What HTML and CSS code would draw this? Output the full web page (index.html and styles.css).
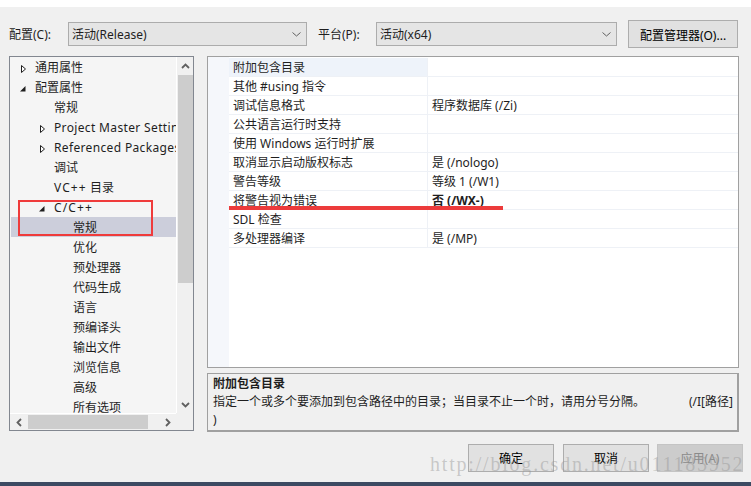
FILE: index.html
```html
<!DOCTYPE html>
<html lang="zh-CN">
<head>
<meta charset="utf-8">
<title>属性页</title>
<link rel="stylesheet" href="styles.css">
</head>
<body>
<div class="screen">
  <div class="topstrip"></div>
  <div class="dialog">
    <div class="toolbar">
      <span class="lbl lbl-cfg">配置(C):</span>
      <div class="combo combo-cfg"><span class="ctext">活动(Release)</span><svg class="chev" width="9" height="5" viewBox="0 0 9 5"><polyline points="0.5,0.5 4.5,4 8.5,0.5" fill="none" stroke="#606060" stroke-width="1"/></svg></div>
      <span class="lbl lbl-plat">平台(P):</span>
      <div class="combo combo-plat"><span class="ctext">活动(x64)</span><svg class="chev" width="9" height="5" viewBox="0 0 9 5"><polyline points="0.5,0.5 4.5,4 8.5,0.5" fill="none" stroke="#606060" stroke-width="1"/></svg></div>
      <button class="btn btn-mgr">配置管理器(O)...</button>
    </div>

    <div class="main">
      <div class="tree">
        <div class="tree-body">
          <div class="tree-rows">
            <div class="row l0"><svg class="tw" width="16" height="20" viewBox="0 0 16 20"><polygon points="2.5,8.5 6.5,12 2.5,15.5" fill="#fff" stroke="#1e1e1e" stroke-width="1"/></svg><span class="t">通用属性</span></div>
            <div class="row l0"><svg class="tw" width="16" height="20" viewBox="0 0 16 20"><polygon points="6.5,9 6.5,14.5 1,14.5" fill="#1e1e1e"/></svg><span class="t">配置属性</span></div>
            <div class="row l1"><span class="tw-empty"></span><span class="t">常规</span></div>
            <div class="row l1"><svg class="tw" width="16" height="20" viewBox="0 0 16 20"><polygon points="2.5,8.5 6.5,12 2.5,15.5" fill="#fff" stroke="#1e1e1e" stroke-width="1"/></svg><span class="t lat">Project Master Settings</span></div>
            <div class="row l1"><svg class="tw" width="16" height="20" viewBox="0 0 16 20"><polygon points="2.5,8.5 6.5,12 2.5,15.5" fill="#fff" stroke="#1e1e1e" stroke-width="1"/></svg><span class="t lat">Referenced Packages</span></div>
            <div class="row l1"><span class="tw-empty"></span><span class="t">调试</span></div>
            <div class="row l1"><span class="tw-empty"></span><span class="t"><span class="plus">VC++</span> 目录</span></div>
            <div class="row l1"><svg class="tw" width="16" height="20" viewBox="0 0 16 20"><polygon points="6.5,9 6.5,14.5 1,14.5" fill="#1e1e1e"/></svg><span class="t plus">C/C++</span></div>
            <div class="row l2 selected"><span class="tw-empty"></span><span class="t">常规</span></div>
            <div class="row l2"><span class="tw-empty"></span><span class="t">优化</span></div>
            <div class="row l2"><span class="tw-empty"></span><span class="t">预处理器</span></div>
            <div class="row l2"><span class="tw-empty"></span><span class="t">代码生成</span></div>
            <div class="row l2"><span class="tw-empty"></span><span class="t">语言</span></div>
            <div class="row l2"><span class="tw-empty"></span><span class="t">预编译头</span></div>
            <div class="row l2"><span class="tw-empty"></span><span class="t">输出文件</span></div>
            <div class="row l2"><span class="tw-empty"></span><span class="t">浏览信息</span></div>
            <div class="row l2"><span class="tw-empty"></span><span class="t">高级</span></div>
            <div class="row l2"><span class="tw-empty"></span><span class="t">所有选项</span></div>
          </div>
          <div class="vscroll">
            <div class="sarrow"><svg width="9" height="6" viewBox="0 0 9 6"><polyline points="1,5 4.5,1.5 8,5" fill="none" stroke="#606060" stroke-width="1.8"/></svg></div>
            <div class="vthumb"></div>
            <div class="spacer"></div>
            <div class="sarrow"><svg width="9" height="6" viewBox="0 0 9 6"><polyline points="1,1 4.5,4.5 8,1" fill="none" stroke="#606060" stroke-width="1.8"/></svg></div>
          </div>
        </div>
        <div class="hscroll-row">
          <div class="hscroll">
            <div class="harrow"><svg width="6" height="9" viewBox="0 0 6 9"><polyline points="5,1 1.5,4.5 5,8" fill="none" stroke="#606060" stroke-width="1.8"/></svg></div>
            <div class="hthumb"></div>
            <div class="spacer"></div>
            <div class="harrow"><svg width="6" height="9" viewBox="0 0 6 9"><polyline points="1,1 4.5,4.5 1,8" fill="none" stroke="#606060" stroke-width="1.8"/></svg></div>
          </div>
          <div class="corner"></div>
        </div>
        <div class="redbox"></div>
      </div>

      <div class="right">
        <div class="grid">
          <div class="gutter"></div>
          <div class="table">
            <div class="prow sel"><div class="pname">附加包含目录</div><div class="pval"></div></div>
            <div class="prow"><div class="pname">其他 #using 指令</div><div class="pval"></div></div>
            <div class="prow"><div class="pname">调试信息格式</div><div class="pval">程序数据库 (/Zi)</div></div>
            <div class="prow"><div class="pname">公共语言运行时支持</div><div class="pval"></div></div>
            <div class="prow"><div class="pname">使用 Windows 运行时扩展</div><div class="pval"></div></div>
            <div class="prow"><div class="pname">取消显示启动版权标志</div><div class="pval">是 (/nologo)</div></div>
            <div class="prow"><div class="pname">警告等级</div><div class="pval">等级 1 (/W1)</div></div>
            <div class="prow"><div class="pname">将警告视为错误</div><div class="pval bold">否 (/WX-)</div></div>
            <div class="prow"><div class="pname">SDL 检查</div><div class="pval"></div></div>
            <div class="prow"><div class="pname">多处理器编译</div><div class="pval">是 (/MP)</div></div>
          </div>
          <div class="redline"></div>
        </div>
        <div class="desc">
          <div class="desc-title">附加包含目录</div>
          <div class="desc-line"><span>指定一个或多个要添加到包含路径中的目录；当目录不止一个时，请用分号分隔。</span><span>(/I[路径]</span></div>
          <div class="desc-line"><span>)</span></div>
        </div>
      </div>
    </div>

    <div class="footer">
      <button class="btn btn-foot btn-ok">确定</button>
      <button class="btn btn-foot">取消</button>
      <button class="btn btn-foot btn-dis">应用(A)</button>
    </div>
    <div class="watermark">http://blog.csdn.net/u011185952</div>
  </div>
  <div class="taskbar"></div>
</div>
</body>
</html>
```

FILE: styles.css
```css
html, body {
  margin: 0;
  padding: 0;
}
body {
  background: #f0f0f0;
  font-family: "Noto Sans", "Noto Sans CJK SC", "Microsoft YaHei", sans-serif;
  font-size: 12px;
  color: #1e1e1e;
}
.screen {
  width: 751px;
  height: 486px;
  overflow: hidden;
  display: flex;
  flex-direction: column;
}
.topstrip {
  flex: none;
  height: 7px;
  background: #ffffff;
}
.dialog {
  flex: none;
  position: relative;
  height: 475px;
  background: #f0f0f0;
}
.taskbar {
  flex: none;
  height: 4px;
  background: #3c4a62;
}

/* toolbar */
.toolbar {
  display: flex;
  align-items: center;
  height: 28px;
  margin-top: 13px;
  padding-left: 9px;
}
.lbl {
  box-sizing: border-box;
  height: 28px;
  padding-top: 2px;
  line-height: 26px;
  white-space: nowrap;
}
.lbl-cfg { width: 59px; }
.lbl-plat { width: 58px; margin-left: 11px; }
.combo {
  box-sizing: border-box;
  height: 24px;
  border: 1px solid #acacac;
  background: #e5e5e5;
  display: flex;
  align-items: center;
  justify-content: space-between;
  padding: 0 5px 0 3px;
}
.ctext {
  padding-top: 2px;
  line-height: 20px;
}
.combo-cfg { width: 239px; }
.combo-plat { width: 241px; }
.chev { display: block; }
.btn {
  box-sizing: border-box;
  height: 28px;
  border: 1px solid #adadad;
  background: #e1e1e1;
  font-family: inherit;
  font-size: 12px;
  color: #000;
  padding: 0;
  margin: 0;
}
.btn-mgr { width: 110px; margin-left: 11px; padding-top: 1px; }

/* main */
.main {
  display: flex;
  align-items: flex-start;
  padding-left: 9px;
  margin-top: 8px;
}
.tree {
  position: relative;
  box-sizing: border-box;
  width: 185px;
  height: 375px;
  border: 1px solid #828790;
  background: #f5f5f5;
  display: flex;
  flex-direction: column;
}
.tree-body {
  display: flex;
  height: 356px;
}
.tree-rows {
  width: 166px;
  overflow: hidden;
}
.row {
  height: 20px;
  display: flex;
  align-items: center;
  white-space: nowrap;
  margin-left: 1px;
}
.row .t {
  padding-top: 2px;
  line-height: 18px;
}
.lat { letter-spacing: 0.35px; }
.plus { letter-spacing: 1.1px; }
.row.l0 { padding-left: 8px; }
.row.l1 { padding-left: 27px; }
.row.l2 { padding-left: 46px; }
.row.selected { background: #cccedb; }
.tw { flex: none; display: block; }
.tw-empty { flex: none; width: 16px; }
.vscroll {
  width: 17px;
  box-sizing: border-box;
  border-left: 1px solid #ffffff;
  background: #f0f0f0;
  display: flex;
  flex-direction: column;
  align-items: center;
}
.sarrow {
  height: 17px;
  display: flex;
  align-items: center;
  justify-content: center;
  flex: none;
}
.vthumb {
  width: 15px;
  height: 208px;
  margin-top: 1px;
  background: #cdcdcd;
  flex: none;
}
.spacer { flex: 1; }
.hscroll-row {
  display: flex;
  height: 17px;
}
.hscroll {
  width: 166px;
  box-sizing: border-box;
  border-top: 1px solid #ffffff;
  background: #f0f0f0;
  display: flex;
  align-items: center;
}
.harrow {
  width: 17px;
  height: 16px;
  display: flex;
  align-items: center;
  justify-content: center;
  flex: none;
}
.hthumb {
  width: 120px;
  height: 14px;
  margin-left: 1px;
  background: #cdcdcd;
  flex: none;
}
.corner {
  width: 17px;
  background: #f0f0f0;
}
.redbox {
  position: absolute;
  left: 8px;
  top: 143px;
  width: 131px;
  height: 32px;
  border: 2px solid #ef3b3b;
}

/* right column */
.right {
  margin-left: 13px;
  width: 532px;
  display: flex;
  flex-direction: column;
}
.grid {
  position: relative;
  box-sizing: border-box;
  height: 312px;
  border: 1px solid #a0a0a0;
  background: #ffffff;
  display: flex;
}
.gutter {
  width: 21px;
  background: #f5f7fb;
  flex: none;
}
.table {
  flex: 1;
  padding-top: 1px;
}
.prow {
  display: flex;
  height: 18px;
  border-bottom: 1px solid #eef1f6;
  white-space: nowrap;
}
.pname, .pval {
  box-sizing: border-box;
  padding-top: 2px;
  line-height: 16px;
}
.pname {
  width: 199px;
  padding-left: 4px;
  border-right: 1px solid #eef1f6;
  flex: none;
}
.prow.sel .pname { background: #eef3fa; }
.pval { padding-left: 4px; }
.bold { font-weight: bold; }
.redline {
  position: absolute;
  left: 21px;
  top: 149px;
  width: 274px;
  height: 4px;
  background: #ec3b3b;
}
.desc {
  box-sizing: border-box;
  margin-top: 5px;
  height: 59px;
  border-style: solid;
  border-color: #a0a0a0;
  border-width: 1px 2px 2px 1px;
  padding: 1px 4px 0 5px;
  line-height: 18px;
  white-space: nowrap;
}
.desc-title { font-weight: bold; }
.desc-line {
  display: flex;
  justify-content: space-between;
}

/* footer */
.footer {
  display: flex;
  justify-content: flex-end;
  gap: 8px;
  margin-top: 12px;
  padding-right: 8px;
}
.btn-foot { width: 86px; }
.btn-ok { margin-right: 1px; }
.btn-dis {
  background: #cccccc;
  border-color: #c4c4c4;
  color: #8a8a8a;
}
.watermark {
  position: absolute;
  left: 430px;
  top: 447px;
  font-family: "Liberation Serif", "DejaVu Serif", serif;
  font-size: 20px;
  line-height: 20px;
  letter-spacing: 1.8px;
  color: rgba(150, 150, 150, 0.45);
  white-space: nowrap;
  pointer-events: none;
}
```
